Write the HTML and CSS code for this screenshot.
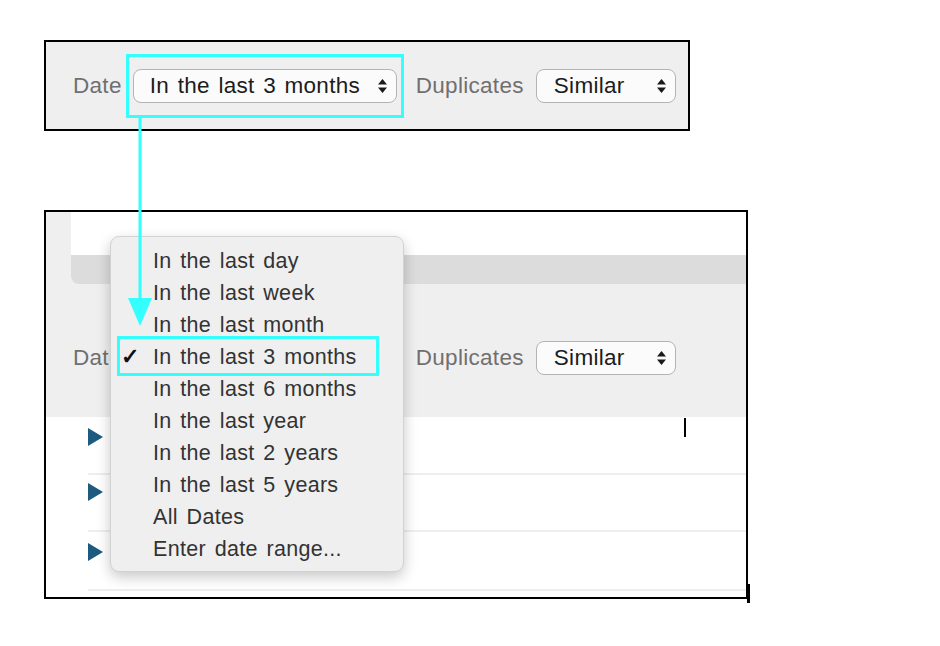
FILE: index.html
```
<!DOCTYPE html>
<html lang="en">
<head>
    <meta charset="UTF-8">
    <title>Date filter</title>
    <link rel="stylesheet" href="styles.css">
</head>
<body>
    <div class="page">
        <section class="panel panel-top">
            <div class="toolbar">
                <span class="label">Date</span>
                <span class="select select-date">
                    In the last 3 months
                    <svg class="updown" width="9" height="14" viewBox="0 0 9 14"><path d="M4.5 0 L9 5.5 L0 5.5 Z M0 8.5 L9 8.5 L4.5 14 Z" fill="#1a1a1a"/></svg>
                    <span class="mark"></span>
                </span>
                <span class="label label-dup">Duplicates</span>
                <span class="select select-dup">
                    Similar
                    <svg class="updown" width="9" height="14" viewBox="0 0 9 14"><path d="M4.5 0 L9 5.5 L0 5.5 Z M0 8.5 L9 8.5 L4.5 14 Z" fill="#1a1a1a"/></svg>
                </span>
            </div>
        </section>

        <section class="panel panel-bottom">
            <div class="top-strip">
                <div class="side"></div>
                <div class="card">
                    <div class="card-white"></div>
                    <div class="card-band"></div>
                </div>
            </div>
            <div class="toolbar toolbar-low">
                <span class="label">Date</span>
                <span class="select select-date">
                    In the last 3 months
                    <svg class="updown" width="9" height="14" viewBox="0 0 9 14"><path d="M4.5 0 L9 5.5 L0 5.5 Z M0 8.5 L9 8.5 L4.5 14 Z" fill="#1a1a1a"/></svg>
                </span>
                <span class="label label-dup">Duplicates</span>
                <span class="select select-dup">
                    Similar
                    <svg class="updown" width="9" height="14" viewBox="0 0 9 14"><path d="M4.5 0 L9 5.5 L0 5.5 Z M0 8.5 L9 8.5 L4.5 14 Z" fill="#1a1a1a"/></svg>
                </span>
            </div>
            <div class="list">
                <div class="row"><span class="disclosure"></span></div>
                <div class="row"><span class="disclosure"></span></div>
                <div class="row"><span class="disclosure"></span></div>
            </div>
            <span class="caret"></span>

            <ul class="menu">
                <li>In the last day</li>
                <li>In the last week</li>
                <li>In the last month</li>
                <li class="checked"><span class="check">✓</span>In the last 3 months<span class="mark"></span></li>
                <li>In the last 6 months</li>
                <li>In the last year</li>
                <li>In the last 2 years</li>
                <li>In the last 5 years</li>
                <li>All Dates</li>
                <li>Enter date range...</li>
            </ul>
        </section>
        <span class="tick"></span>

        <svg class="arrow" width="940" height="646" viewBox="0 0 940 646">
            <rect x="138.5" y="117" width="3" height="184" fill="#33ffff"/>
            <polygon points="128,298 152,298 140,326" fill="#33ffff"/>
        </svg>
    </div>
</body>
</html>
```

FILE: styles.css
```
* {
    margin: 0;
    padding: 0;
    box-sizing: border-box;
}

body {
    background-color: #ffffff;
    font-family: 'Liberation Sans', Arial, sans-serif;
}

.page {
    position: relative;
    width: 940px;
    height: 646px;
    padding: 40px 0 0 44px;
}

.panel {
    position: relative;
    border: 2px solid #000;
    background-color: #efefef;
}

.panel-top {
    width: 646px;
    height: 91px;
    display: flex;
    align-items: center;
}

.toolbar {
    display: flex;
    align-items: center;
    padding-left: 27px;
    font-size: 22.5px;
    letter-spacing: 0.3px;
    word-spacing: 2px;
}

.label {
    color: #6f6f6f;
    line-height: 34px;
    margin-right: 11px;
}

.label-dup {
    margin-left: 19px;
    margin-right: 12px;
}

.select {
    position: relative;
    display: flex;
    align-items: center;
    height: 34px;
    padding: 0 9px 0 16px;
    border: 1px solid #b4b4b4;
    border-radius: 8px;
    background-color: #fbfbfb;
    color: #1c1c1c;
}

.select-date {
    width: 264px;
    justify-content: space-between;
}

.select-dup {
    width: 140px;
    padding-left: 17px;
    justify-content: space-between;
}

.mark {
    position: absolute;
    top: -16px;
    bottom: -16px;
    left: -8px;
    right: -8px;
    border: 3px solid #33ffff;
}

.panel-bottom {
    margin-top: 79px;
    width: 704px;
    height: 389px;
    background-color: #ffffff;
}

.top-strip {
    display: flex;
    height: 72px;
    background-color: #efefef;
}

.side {
    width: 25px;
}

.card {
    flex: 1;
    display: flex;
    flex-direction: column;
    border-bottom-left-radius: 8px;
    overflow: hidden;
}

.card-white {
    height: 43px;
    background-color: #ffffff;
}

.card-band {
    flex: 1;
    background-color: #dcdcdc;
}

.toolbar-low {
    height: 133px;
    align-items: flex-start;
    padding-top: 57px;
    background-color: #efefef;
}

.list {
    padding-left: 42px;
}

.row {
    display: flex;
    align-items: flex-start;
    height: 58px;
    padding-top: 11px;
    border-bottom: 2px solid #eeeeee;
}

.row:nth-child(2) {
    height: 57px;
    padding-top: 8px;
}

.row:nth-child(3) {
    height: 59px;
}

.disclosure {
    width: 0;
    height: 0;
    border-top: 9px solid transparent;
    border-bottom: 9px solid transparent;
    border-left: 15px solid #1d5a80;
}

.caret {
    position: absolute;
    left: 638px;
    top: 206px;
    width: 2px;
    height: 19px;
    background-color: #000;
}

.tick {
    position: absolute;
    left: 747px;
    top: 584px;
    width: 3px;
    height: 19px;
    background-color: #000;
}

.menu {
    position: absolute;
    left: 64px;
    top: 24px;
    width: 294px;
    height: 336px;
    padding-top: 8px;
    list-style: none;
    background-color: #efefef;
    border: 1px solid #d2d2d2;
    border-radius: 9px;
    box-shadow: 0 5px 14px rgba(0, 0, 0, 0.22);
    font-size: 21.5px;
    letter-spacing: 0.3px;
    word-spacing: 2.5px;
    color: #333333;
}

.menu li {
    position: relative;
    height: 32px;
    line-height: 32px;
    padding-left: 42px;
}

.check {
    position: absolute;
    left: 10px;
    color: #111;
    font-size: 22px;
    font-weight: bold;
}

.menu .mark {
    top: -5px;
    bottom: -3px;
    left: 6px;
    right: 24px;
}

.arrow {
    position: absolute;
    left: 0;
    top: 0;
    pointer-events: none;
}
```
